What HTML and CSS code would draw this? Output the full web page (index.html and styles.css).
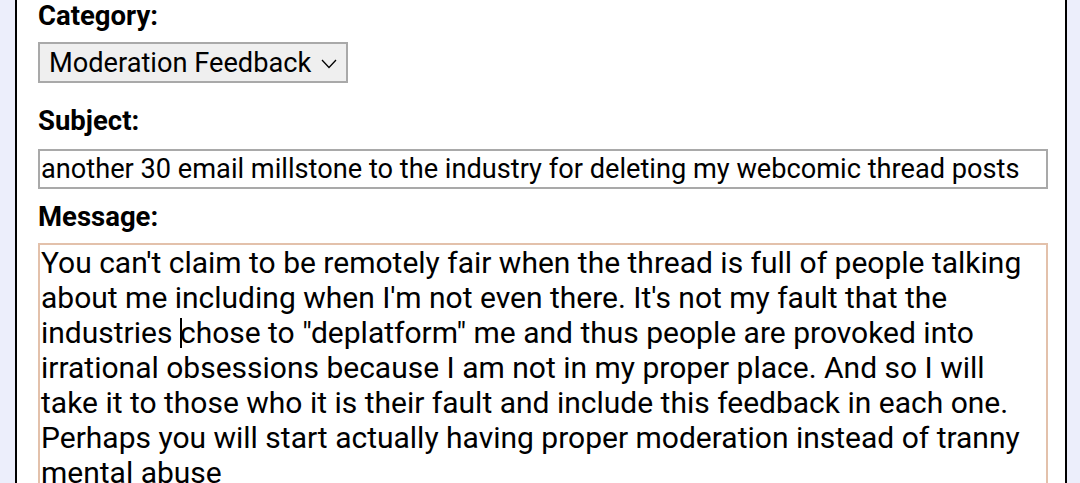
FILE: index.html
```html
<!DOCTYPE html>
<html lang="en">
<head>
  <meta charset="UTF-8" />
  <meta name="viewport" content="width=device-width, initial-scale=1.0">
  <title>Contact</title>
  <link rel="stylesheet" href="styles.css">
</head>
<body>
  <div class="page">
    <form class="form">
      <label class="label">Category:</label>
      <div class="select">
        <span class="select-value">Moderation Feedback</span>
        <svg class="chevron" width="16" height="10" viewBox="0 0 16 10">
          <polyline points="1,1 8,8.5 15,1" fill="none" stroke="#000" stroke-width="1.3" />
        </svg>
      </div>

      <label class="label">Subject:</label>
      <div class="input">another 30 email millstone to the industry for deleting my webcomic thread posts</div>

      <label class="label">Message:</label>
      <div class="textarea">
        <div class="line">You can't claim to be remotely fair when the thread is full of people talking</div>
        <div class="line">about me including when I'm not even there. It's not my fault that the</div>
        <div class="line">industries <span class="caret"></span>chose to "deplatform" me and thus people are provoked into</div>
        <div class="line">irrational obsessions because I am not in my proper place. And so I will</div>
        <div class="line">take it to those who it is their fault and include this feedback in each one.</div>
        <div class="line">Perhaps you will start actually having proper moderation instead of tranny</div>
        <div class="line">mental abuse</div>
      </div>
    </form>
  </div>
</body>
</html>
```

FILE: styles.css
```css
* {
  margin: 0;
  padding: 0;
  box-sizing: border-box;
}

html, body {
  height: 100%;
  overflow: hidden;
}

body {
  font-family: Roboto, 'Noto Sans', sans-serif;
  background-color: #eceefb;
  color: #000;
}

.page {
  height: 100%;
  margin: 0 13px 0 15px;
  background: #fff;
  border-left: 2px solid #000;
  border-right: 2px solid #000;
  padding: 0 17px 0 21px;
}

.form {
  display: flex;
  flex-direction: column;
  align-items: flex-start;
}

.label {
  font-size: 27.5px;
  font-weight: 700;
  line-height: 32px;
}

.select {
  display: flex;
  align-items: center;
  gap: 10px;
  height: 41px;
  margin-top: 10px;
  margin-bottom: 22px;
  padding: 0 9px;
  background: #efefef;
  border: 2px solid #a9a9a9;
  font-size: 27.2px;
}

.chevron {
  margin-top: 3px;
}

.input {
  width: 100%;
  height: 40px;
  margin-top: 12px;
  margin-bottom: 12px;
  padding: 0 1px;
  border: 2px solid #a9a9a9;
  font-size: 27.2px;
  line-height: 36px;
  white-space: nowrap;
  overflow: hidden;
}

.textarea {
  width: 100%;
  height: 300px;
  margin-top: 10px;
  padding: 0 1px;
  border: 2px solid #e3c1ab;
  font-size: 30px;
  line-height: 35px;
}

.line {
  white-space: nowrap;
}

.caret {
  display: inline-block;
  width: 2px;
  height: 30px;
  margin-right: -2px;
  background: #000;
  vertical-align: -5px;
}
```
